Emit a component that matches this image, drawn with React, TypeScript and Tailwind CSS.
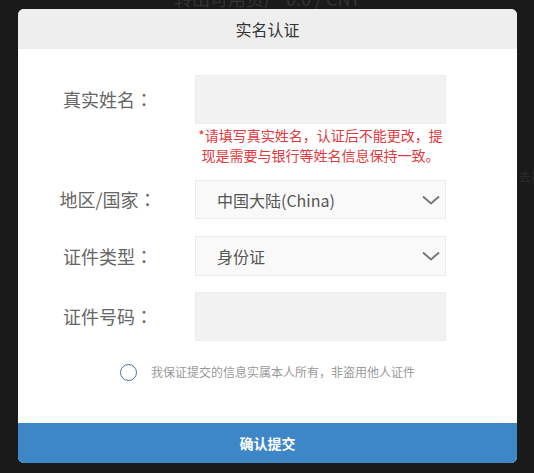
import React from "react";

const font = { fontFamily: '"Noto Sans CJK SC", "Noto Sans", sans-serif' };
const jp = { fontFamily: '"Noto Sans CJK JP", "Noto Sans CJK SC", sans-serif' };

function Chevron() {
  return (
    <svg width="18" height="10" viewBox="0 0 18 10" fill="none">
      <path d="M1 1.5 L9 8.5 L17 1.5" stroke="#777" strokeWidth="2" />
    </svg>
  );
}

function Label({ text, h }: { text: string; h: string }) {
  return (
    <div className={`w-[130px] ${h} flex items-center justify-center text-[18px] text-[#666]`}>
      <span>{text}</span>
      <span style={jp}>：</span>
    </div>
  );
}

export default function App() {
  return (
    <div
      className="relative w-[534px] h-[473px] overflow-hidden bg-[#1a1a1a]"
      style={font}
    >
      {/* underlying page content behind the overlay */}
      <div className="absolute left-0 right-0 top-[-13px] text-center text-[18px] text-[#333] leading-[22px] whitespace-nowrap">
        转出可用资产 0.0 / CNY
      </div>
      <div className="absolute left-[519px] top-[170px] text-[12px] text-[#2a2a2a] leading-[14px] whitespace-nowrap">
        去提
      </div>

      {/* modal */}
      <div className="absolute left-[18px] top-[9px] w-[499px] h-[454px] flex flex-col rounded-[6px] overflow-hidden bg-white">
        <div className="h-[40px] shrink-0 flex items-center justify-center bg-[#eeeeee] text-[16px] text-[#333]">
          实名认证
        </div>

        <div className="flex-1 flex flex-col pt-[26px] pl-[25px]">
          {/* name */}
          <div className="flex items-start">
            <Label text="真实姓名" h="h-[49px]" />
            <div className="ml-[22px] w-[251px] flex flex-col">
              <div className="h-[49px] bg-[#f3f2f2] border border-[#ececec]" />
              <div className="mt-[1px] text-center text-[14px] leading-[20px] text-[#e0393e]">
                *请填写真实姓名，认证后不能更改，提现是需要与银行等姓名信息保持一致。
              </div>
            </div>
          </div>

          {/* region */}
          <div className="flex items-start mt-[15px]">
            <Label text="地区/国家" h="h-[39px]" />
            <div className="ml-[22px] w-[251px] h-[39px] flex items-center justify-between pl-[21px] pr-[5px] bg-[#f9f9f9] border border-[#ececec] text-[16px] text-[#555]">
              <span>中国大陆(China)</span>
              <Chevron />
            </div>
          </div>

          {/* id type */}
          <div className="flex items-start mt-[17px]">
            <Label text="证件类型" h="h-[40px]" />
            <div className="ml-[22px] w-[251px] h-[40px] flex items-center justify-between pl-[21px] pr-[5px] bg-[#f9f9f9] border border-[#ececec] text-[16px] text-[#555]">
              <span>身份证</span>
              <Chevron />
            </div>
          </div>

          {/* id number */}
          <div className="flex items-start mt-[16px]">
            <Label text="证件号码" h="h-[49px]" />
            <div className="ml-[22px] w-[251px] h-[49px] bg-[#f3f2f2] border border-[#ececec]" />
          </div>

          {/* agreement */}
          <div className="flex items-center justify-center gap-[14px] mt-[22px] pr-[25px]">
            <div className="w-[17px] h-[17px] rounded-full border-[1.5px] border-[#4a7196]" />
            <span className="text-[12px] text-[#999]">
              我保证提交的信息实属本人所有，非盗用他人证件
            </span>
          </div>
        </div>

        <div className="h-[40px] shrink-0 flex items-center justify-center bg-[#3d87c8] text-[14px] font-bold text-white">
          确认提交
        </div>
      </div>
    </div>
  );
}
